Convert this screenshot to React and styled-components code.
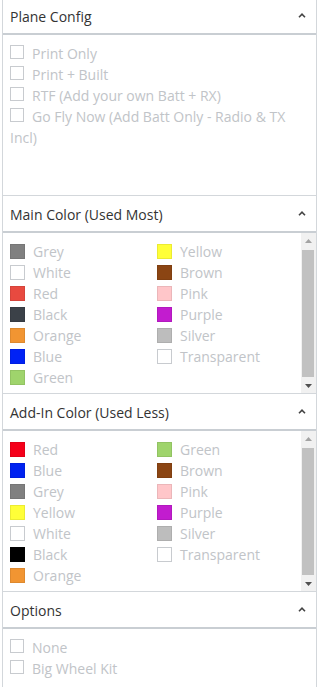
import styled, { createGlobalStyle } from 'styled-components'

const GlobalStyle = createGlobalStyle`
    html, body {
        margin: 0;
        padding: 0;
        background: #ffffff;
    }

    body {
        font-family: "Open Sans", "Liberation Sans", sans-serif;
        font-size: 14px;
        color: #333333;
    }
`

const mainColors = [
    { name: 'Grey', color: '#808080' },
    { name: 'Yellow', color: '#ffff38' },
    { name: 'White', color: '#ffffff' },
    { name: 'Brown', color: '#8b4513' },
    { name: 'Red', color: '#e84a40' },
    { name: 'Pink', color: '#ffc6c9' },
    { name: 'Black', color: '#3b4148' },
    { name: 'Purple', color: '#c21ccf' },
    { name: 'Orange', color: '#f19532' },
    { name: 'Silver', color: '#bdbdbd' },
    { name: 'Blue', color: '#0022f5' },
    { name: 'Transparent', color: '#ffffff' },
    { name: 'Green', color: '#9fd46c' },
]

const addInColors = [
    { name: 'Red', color: '#f5001a' },
    { name: 'Green', color: '#9fd46c' },
    { name: 'Blue', color: '#0022f0' },
    { name: 'Brown', color: '#8b4513' },
    { name: 'Grey', color: '#808080' },
    { name: 'Pink', color: '#ffc6c9' },
    { name: 'Yellow', color: '#ffff38' },
    { name: 'Purple', color: '#c21ccf' },
    { name: 'White', color: '#ffffff' },
    { name: 'Silver', color: '#bdbdbd' },
    { name: 'Black', color: '#000000' },
    { name: 'Transparent', color: '#ffffff' },
    { name: 'Orange', color: '#f19532' },
]

const Caret = () => (
    <svg width="8" height="5" viewBox="0 0 8 5">
        <polyline points="1,4.2 4,1.2 7,4.2" fill="none" stroke="#444" strokeWidth="1.6" />
    </svg>
)

// headless capture hides native scrollbars, so this draws the classic one
const ScrollBar = () => (
    <Bar>
        <BarButton>
            <svg width="7" height="4" viewBox="0 0 7 4">
                <polygon points="0,4 7,4 3.5,0" fill="#a3a3a3" />
            </svg>
        </BarButton>
        <Track>
            <Thumb />
        </Track>
        <BarButton>
            <svg width="7" height="4" viewBox="0 0 7 4">
                <polygon points="0,0 7,0 3.5,4" fill="#505050" />
            </svg>
        </BarButton>
    </Bar>
)

const Section = ({ title, children, scroll }) => (
    <>
        <Header>
            <span>{title}</span>
            <Caret />
        </Header>
        <Body>
            <Content>{children}</Content>
            {scroll && <ScrollBar />}
        </Body>
    </>
)

const CheckList = ({ items }) => (
    <CheckWrap>
        {items.map((label) => (
            <CheckItem key={label}>
                <Box />
                <Label>{label}</Label>
            </CheckItem>
        ))}
    </CheckWrap>
)

const ColorList = ({ colors }) => (
    <ColorGrid>
        {colors.map((c) => (
            <ColorItem key={c.name}>
                <Swatch $color={c.color} $light={c.color === '#ffffff'} />
                <Label>{c.name}</Label>
            </ColorItem>
        ))}
    </ColorGrid>
)

export default function App() {
    return (
        <>
            <GlobalStyle />
            <Panel>
                <Section title="Plane Config">
                    <CheckList
                        items={[
                            'Print Only',
                            'Print + Built',
                            'RTF (Add your own Batt + RX)',
                            'Go Fly Now (Add Batt Only - Radio & TX Incl)',
                        ]}
                    />
                </Section>
                <Section title="Main Color (Used Most)" scroll>
                    <ColorList colors={mainColors} />
                </Section>
                <Section title="Add-In Color (Used Less)" scroll>
                    <ColorList colors={addInColors} />
                </Section>
                <Section title="Options">
                    <CheckList items={['None', 'Big Wheel Kit']} />
                </Section>
            </Panel>
        </>
    )
}

const Panel = styled.div`
    width: 315px;
    margin: -2px 0 0 2px;
    box-sizing: border-box;
    border-left: 1px solid #d3d7db;
    border-right: 1px solid #d3d7db;
`

const Header = styled.div`
    height: 33px;
    box-sizing: content-box;
    display: flex;
    align-items: center;
    justify-content: space-between;
    padding: 2px 10px 0 7px;
    background: #ffffff;
    border-bottom: 2px solid #c9ced3;
    font-size: 14px;
    color: #333333;

    svg {
        margin-top: -3px;
    }
`

const Body = styled.div`
    height: 160px;
    display: flex;
    overflow: hidden;
    border-bottom: 1px solid #d3d7db;
    background: #ffffff;
`

const Content = styled.div`
    flex: 1;
    min-width: 0;
    overflow: hidden;
`

const Bar = styled.div`
    width: 15px;
    flex: none;
    display: flex;
    flex-direction: column;
    background: #f1f1f1;
`

const BarButton = styled.div`
    height: 15px;
    flex: none;
    display: flex;
    align-items: center;
    justify-content: center;
`

const Track = styled.div`
    flex: 1;
    padding: 2px 2px 1px 1px;
    display: flex;
`

const Thumb = styled.div`
    flex: 1;
    background: #c1c1c1;
`

const CheckWrap = styled.div`
    padding: 8px 12px 0 7px;
    line-height: 21px;
`

const CheckItem = styled.div`
    font-size: 14px;
`

const Box = styled.span`
    display: inline-block;
    width: 14px;
    height: 14px;
    box-sizing: border-box;
    border: 1px solid #c8cbcf;
    background: #ffffff;
    vertical-align: 0;
    margin-right: 8px;
`

const Label = styled.span`
    color: #c1c4c8;
    font-size: 14px;
`

const ColorGrid = styled.div`
    display: grid;
    grid-template-columns: 147px 1fr;
    grid-auto-rows: 21px;
    padding: 8px 0 0 7px;
`

const ColorItem = styled.div`
    display: flex;
    align-items: center;
    gap: 8px;
    line-height: 21px;
`

const Swatch = styled.span`
    width: 15px;
    height: 15px;
    box-sizing: border-box;
    flex: none;
    margin-top: -1px;
    background: ${(p) => p.$color};
    border: 1px solid ${(p) => (p.$light ? '#c8cbcf' : 'rgba(0, 0, 0, 0.08)')};
`
